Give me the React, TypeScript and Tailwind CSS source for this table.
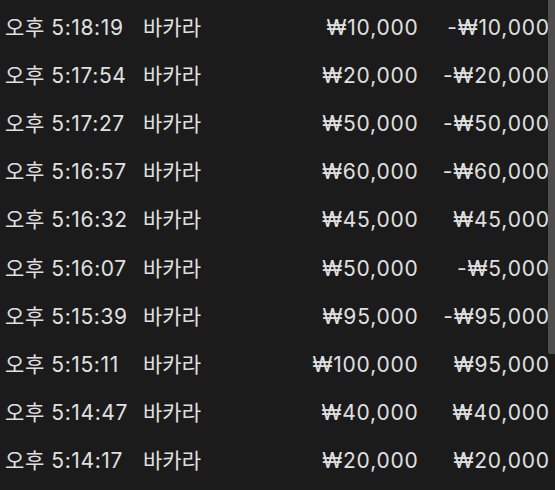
const rows = [
  { time: "오후 5:18:19", game: "바카라", amount: "₩10,000", result: "-₩10,000" },
  { time: "오후 5:17:54", game: "바카라", amount: "₩20,000", result: "-₩20,000" },
  { time: "오후 5:17:27", game: "바카라", amount: "₩50,000", result: "-₩50,000" },
  { time: "오후 5:16:57", game: "바카라", amount: "₩60,000", result: "-₩60,000" },
  { time: "오후 5:16:32", game: "바카라", amount: "₩45,000", result: "₩45,000" },
  { time: "오후 5:16:07", game: "바카라", amount: "₩50,000", result: "-₩5,000" },
  { time: "오후 5:15:39", game: "바카라", amount: "₩95,000", result: "-₩95,000" },
  { time: "오후 5:15:11", game: "바카라", amount: "₩100,000", result: "₩95,000" },
  { time: "오후 5:14:47", game: "바카라", amount: "₩40,000", result: "₩40,000" },
  { time: "오후 5:14:17", game: "바카라", amount: "₩20,000", result: "₩20,000" },
];

export default function App() {
  return (
    <div
      className="relative w-[555px] h-[490px] overflow-hidden bg-[#1b1b1b] text-[#e0e0e0] text-[21px] pt-[3px]"
      style={{ fontFamily: 'Inter, "Noto Sans CJK KR", sans-serif' }}
    >
      {rows.map((r, i) => (
        <div key={i} className="flex items-center h-[48.2px] pl-[5px] pr-[6px] leading-none">
          <span className="w-[138px] shrink-0 whitespace-nowrap tracking-[0.6px]">{r.time}</span>
          <span className="flex-1 whitespace-nowrap">{r.game}</span>
          <span className="whitespace-nowrap text-right tracking-[0.8px] -mr-[0.8px]">{r.amount}</span>
          <span className="w-[132px] shrink-0 whitespace-nowrap text-right tracking-[0.8px] -mr-[0.8px]">{r.result}</span>
        </div>
      ))}
      {/* scroll indicator */}
      <div className="absolute right-0 top-0 w-[7px] h-[354px] bg-[#4d4d4d] rounded-bl-[2px]" />
    </div>
  );
}
